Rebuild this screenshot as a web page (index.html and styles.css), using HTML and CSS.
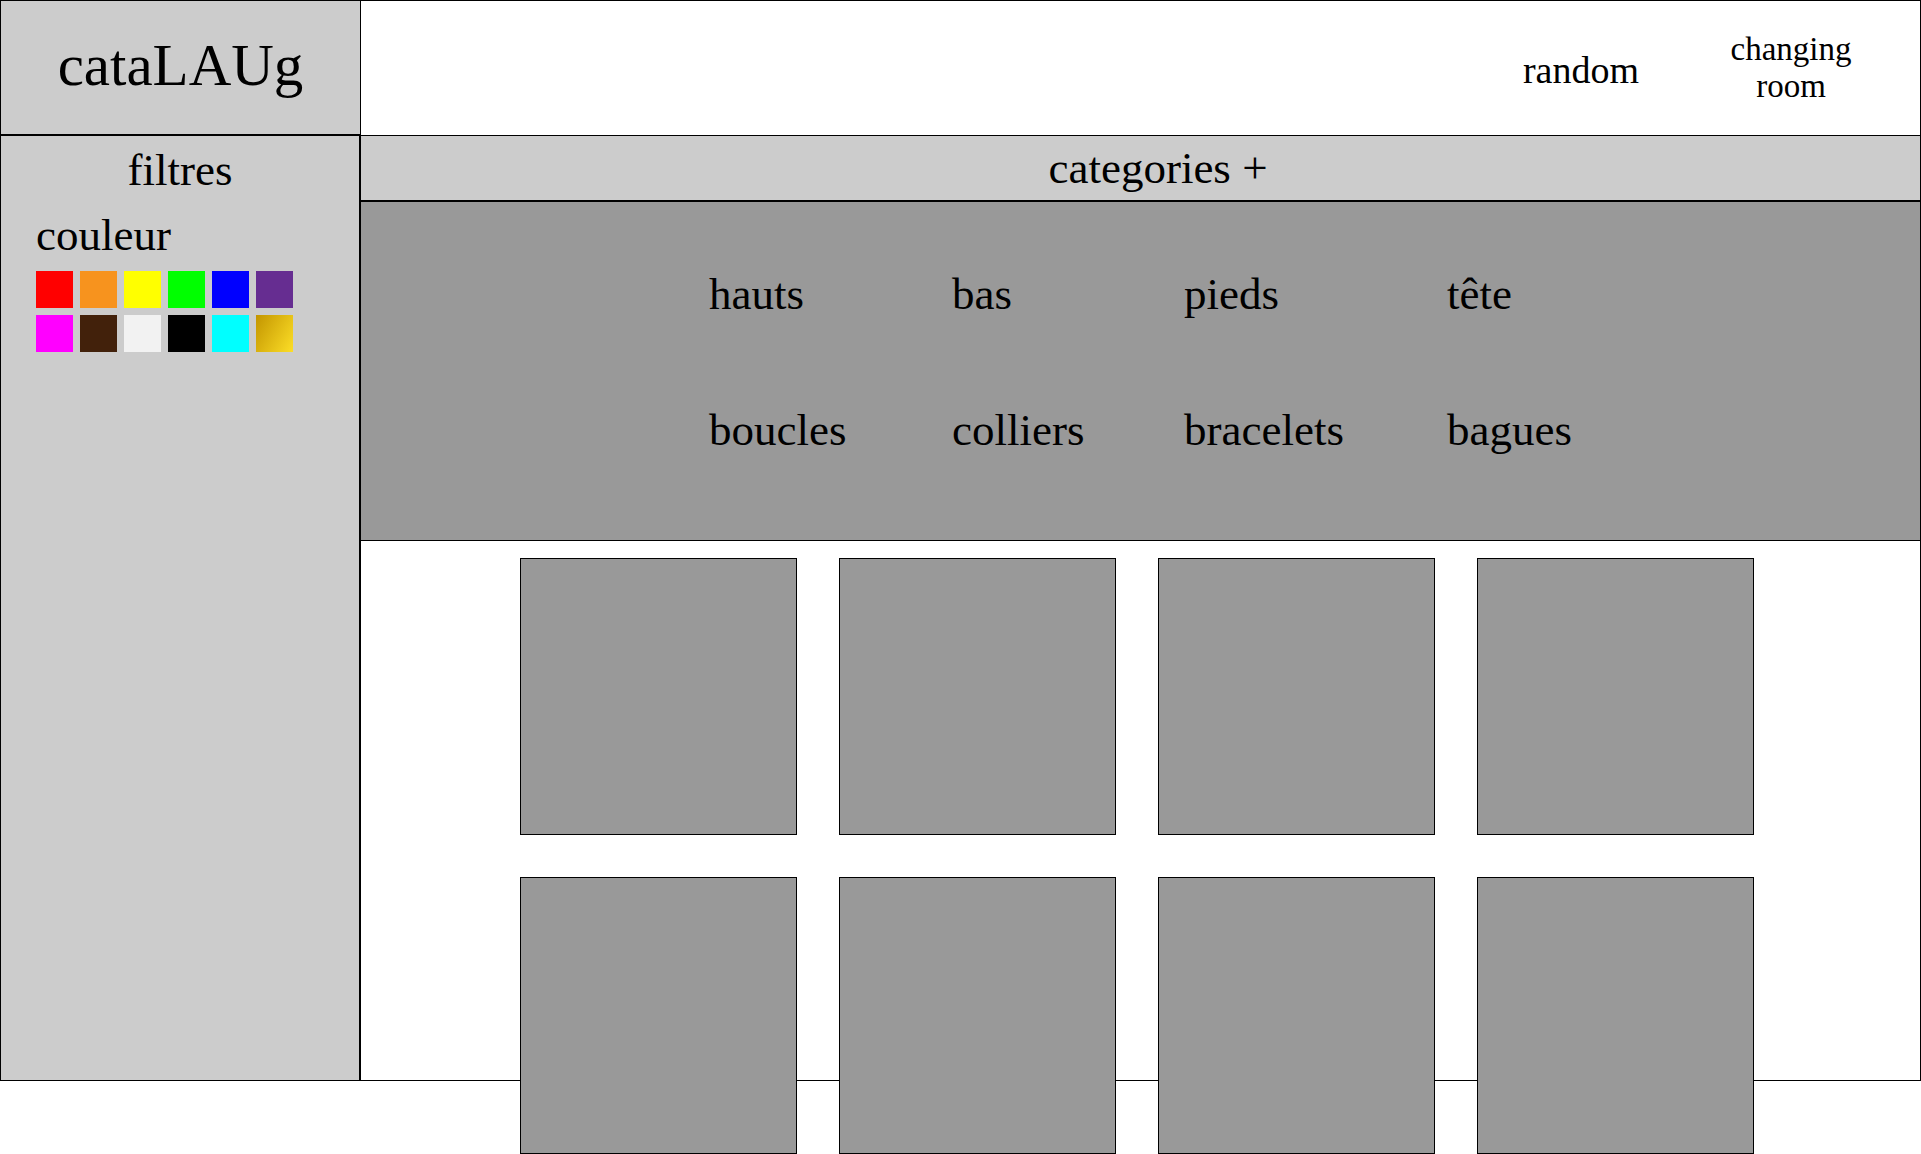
FILE: index.html
```html
<!DOCTYPE html>
<html lang="fr">
<head>
    <meta charset="UTF-8">
    <meta name="viewport" content="width=device-width, initial-scale=1.0">
    <title>cataLAUg</title>
    <link rel="stylesheet" href="styles.css">
</head>
<body>

    <div class="page">
        <div class="logo">cataLAUg</div>

        <div class="topbar">
            <a class="nav-link random">random</a>
            <a class="nav-link changing">changing<br>room</a>
        </div>

        <div class="sidebar">
            <h2>filtres</h2>
            <h3>couleur</h3>
            <div class="swatches">
                <span class="swatch red"></span>
                <span class="swatch orange"></span>
                <span class="swatch yellow"></span>
                <span class="swatch green"></span>
                <span class="swatch blue"></span>
                <span class="swatch purple"></span>
                <span class="swatch magenta"></span>
                <span class="swatch brown"></span>
                <span class="swatch white"></span>
                <span class="swatch black"></span>
                <span class="swatch cyan"></span>
                <span class="swatch gold"></span>
            </div>
        </div>

        <div class="main">
            <div class="catbar">categories +</div>

            <div class="catpanel">
                <span>hauts</span>
                <span>bas</span>
                <span>pieds</span>
                <span>tête</span>
                <span>boucles</span>
                <span>colliers</span>
                <span>bracelets</span>
                <span>bagues</span>
            </div>

            <div class="items">
                <div class="item"></div>
                <div class="item"></div>
                <div class="item"></div>
                <div class="item"></div>
                <div class="item"></div>
                <div class="item"></div>
                <div class="item"></div>
                <div class="item"></div>
            </div>
        </div>
    </div>

</body>
</html>
```

FILE: styles.css
```css
* {
    margin: 0;
    padding: 0;
    box-sizing: border-box;
    font-family: "Liberation Serif", "Times New Roman", serif;
    font-weight: normal;
}

body {
    background: #ffffff;
    color: #000000;
}

.page {
    display: grid;
    grid-template-columns: 361px 1560px;
    grid-template-rows: 136px 945px;
    height: 1154px;
    align-content: start;
}

/* logo + header */
.logo {
    background: #cccccc;
    border: 1px solid #000;
    border-bottom-width: 2px;
    display: flex;
    justify-content: center;
    align-items: center;
    padding-bottom: 4px;
    font-size: 59px;
}

.topbar {
    border: 1px solid #000;
    border-left: none;
    display: flex;
    justify-content: flex-end;
    align-items: center;
    gap: 72px;
    padding-right: 49px;
}

.nav-link {
    color: #000;
    cursor: pointer;
}

.random {
    font-size: 38px;
    margin-top: 3px;
}

.changing {
    width: 160px;
    text-align: center;
    font-size: 33px;
    line-height: 37px;
}

/* filtres */
.sidebar {
    background: #cccccc;
    border-left: 1px solid #000;
    border-right: 2px solid #000;
    border-bottom: 1px solid #000;
    padding: 9px 0 0 35px;
}

.sidebar h2 {
    font-size: 45px;
    line-height: 50px;
    text-align: center;
    margin-left: -35px;
}

.sidebar h3 {
    font-size: 45px;
    line-height: 50px;
    margin-top: 15px;
}

.swatches {
    display: grid;
    grid-template-columns: repeat(6, 37px);
    grid-auto-rows: 37px;
    gap: 7px;
    margin-top: 11px;
}

.red { background: #ff0000; }
.orange { background: #f7931e; }
.yellow { background: #ffff00; }
.green { background: #00ff00; }
.blue { background: #0000ff; }
.purple { background: #662d91; }
.magenta { background: #ff00ff; }
.brown { background: #42210b; }
.white { background: #f2f2f2; }
.black { background: #000000; }
.cyan { background: #00ffff; }
.gold { background: linear-gradient(120deg, #c39500, #fcde27); }

/* contenu */
.main {
    border-right: 1px solid #000;
    border-bottom: 1px solid #000;
}

.catbar {
    height: 66px;
    background: #cccccc;
    border-bottom: 2px solid #000;
    font-size: 45px;
    line-height: 58px;
    padding: 3px 0 0 35px;
    text-align: center;
}

.catpanel {
    height: 339px;
    background: #999999;
    border-bottom: 1px solid #000;
    display: grid;
    grid-template-columns: 243px 232px 263px auto;
    grid-auto-rows: 50px;
    row-gap: 86px;
    padding: 67px 0 0 348px;
    font-size: 45px;
    line-height: 50px;
}

.items {
    display: grid;
    grid-template-columns: repeat(4, 277px);
    grid-auto-rows: 277px;
    gap: 42px;
    padding: 17px 0 0 159px;
}

.item {
    background: #999999;
    border: 1px solid #000;
}
```
